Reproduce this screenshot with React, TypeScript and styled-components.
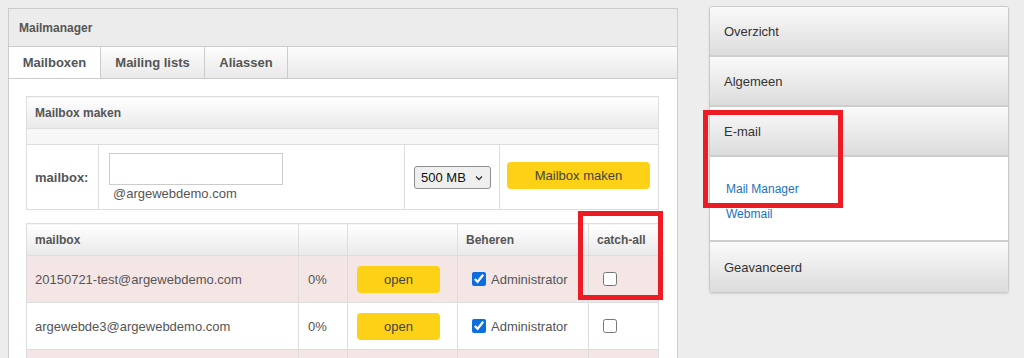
import React from 'react';
import styled, { createGlobalStyle } from 'styled-components';

const GlobalStyle = createGlobalStyle`
  html, body {
    margin: 0;
    padding: 0;
    background: #ededed;
    font-family: "Liberation Sans", Arial, sans-serif;
    color: #555;
  }
`;

const Page = styled.div`
  position: relative;
  display: flex;
  align-items: flex-start;
  padding: 6px 0 0 8px;
`;

const Panel = styled.section`
  width: 668px;
  margin-top: 2px;
  border: 1px solid #ccc;
  background: #fff;
`;

const PanelHeader = styled.div`
  height: 37px;
  display: flex;
  align-items: center;
  padding-left: 10px;
  background: #ececec;
  border-bottom: 1px solid #ccc;
  font-size: 12px;
  font-weight: bold;
  color: #555;
`;

const Tabs = styled.div`
  display: flex;
  height: 31px;
  background: linear-gradient(#fdfdfd, #e9e9e9);
  border-bottom: 1px solid #ccc;
`;

const Tab = styled.div<{ $active?: boolean; $w: number }>`
  display: flex;
  align-items: center;
  justify-content: center;
  box-sizing: border-box;
  width: ${({ $w }) => $w}px;
  border-right: 1px solid #ccc;
  font-size: 13px;
  font-weight: bold;
  color: #555;
  background: ${({ $active }) => ($active ? '#fff' : 'transparent')};
`;

const Content = styled.div`
  padding: 17px 18px 0 17px;
`;

const Grid = styled.table`
  width: 100%;
  border-collapse: collapse;
  table-layout: fixed;
  border: 1px solid #ddd;
  font-size: 13px;
  color: #555;
`;

const HeadCell = styled.th<{ $plain?: boolean }>`
  height: 31px;
  padding: 0 8px;
  text-align: left;
  font-size: 12px;
  font-weight: bold;
  color: #555;
  background: linear-gradient(#fff, #e9e9e9);
  border-left: ${({ $plain }) => ($plain ? '0' : '1px solid #ddd')};
  border-bottom: 1px solid #ddd;
`;

const Strip = styled.td`
  height: 15px;
  padding: 0;
  background: #f7f7f7;
  border-bottom: 1px solid #ddd;
`;

const FormCell = styled.td<{ $pad?: number }>`
  height: 64px;
  padding: 0 0 0 ${({ $pad }) => $pad ?? 8}px;
  border: 1px solid #ddd;
  vertical-align: middle;
`;

const Label = styled.span`
  font-weight: bold;
  font-size: 13px;
  color: #555;
`;

const TextInput = styled.input`
  display: block;
  box-sizing: border-box;
  width: 174px;
  height: 32px;
  margin: 0;
  border: 1px solid #ccc;
  background: #fff;
`;

const Domain = styled.div`
  margin: 1px 0 0 4px;
  font-size: 13px;
  color: #555;
`;

const SelectBox = styled.div`
  position: relative;
  display: inline-flex;
  align-items: center;
  box-sizing: border-box;
  width: 77px;
  height: 23px;
  padding-left: 6px;
  border: 1px solid #8f8f8f;
  border-radius: 3px;
  background: #efefef;
  font-size: 13px;
  color: #111;
`;

const Chevron = styled.svg`
  position: absolute;
  right: 7px;
  top: 8px;
`;

const YellowButton = styled.button<{ $w: number; $h: number }>`
  width: ${({ $w }) => $w}px;
  height: ${({ $h }) => $h}px;
  margin: 0;
  border: 0;
  border-radius: 4px;
  background: #fdd116;
  font-family: "Liberation Sans", Arial, sans-serif;
  font-size: 13px;
  color: #444;
  cursor: pointer;
`;

const MakeButton = styled(YellowButton)`
  margin-bottom: 4px;
`;

const ListTable = styled(Grid)`
  margin-top: 13px;
`;

const Row = styled.tr<{ $odd?: boolean }>`
  background: ${({ $odd }) => ($odd ? '#f5e6e6' : '#fff')};
`;

const Cell = styled.td<{ $pad?: number }>`
  height: 46px;
  padding: 0 0 0 ${({ $pad }) => $pad ?? 8}px;
  border: 1px solid #ddd;
  white-space: nowrap;
  vertical-align: middle;
`;

const Check = styled.input`
  width: 14px;
  height: 14px;
  margin: 0 5px 0 0;
  vertical-align: -2px;
  accent-color: #0b6ddf;
`;

const Sidebar = styled.nav`
  width: 298px;
  margin-left: 31px;
  border: 1px solid #cacaca;
  border-radius: 3px;
  overflow: hidden;
  box-shadow: 0 1px 2px rgba(0, 0, 0, 0.12);
`;

const NavItem = styled.div`
  height: 48px;
  display: flex;
  align-items: center;
  padding-left: 14px;
  background: linear-gradient(#fafafa, #dcdcdc);
  border-bottom: 2px solid #cdcdcd;
  font-size: 13px;
  color: #333;

  &:last-child {
    height: 50px;
    border-bottom: 0;
  }
`;

const SubMenu = styled.div`
  display: flex;
  flex-direction: column;
  padding: 20px 16px 13px;
  background: #fff;
  border-bottom: 2px solid #cdcdcd;
`;

const SubLink = styled.a`
  line-height: 25px;
  font-size: 12px;
  color: #1a72b8;
  text-decoration: none;
`;

const Marker = styled.div<{ $x: number; $y: number; $w: number; $h: number }>`
  position: absolute;
  left: ${({ $x }) => $x}px;
  top: ${({ $y }) => $y}px;
  width: ${({ $w }) => $w}px;
  height: ${({ $h }) => $h}px;
  box-sizing: border-box;
  border: 5px solid #ed1c24;
  pointer-events: none;
`;

const mailboxes = ['20150721-test@argewebdemo.com', 'argewebde3@argewebdemo.com'];

export default function App() {
  return (
    <>
      <GlobalStyle />
      <Page>
        <Panel>
          <PanelHeader>Mailmanager</PanelHeader>
          <Tabs>
            <Tab $active $w={92}>Mailboxen</Tab>
            <Tab $w={104}>Mailing lists</Tab>
            <Tab $w={83}>Aliassen</Tab>
          </Tabs>
          <Content>
            <Grid>
              <colgroup>
                <col style={{ width: 72 }} />
                <col style={{ width: 306 }} />
                <col style={{ width: 95 }} />
                <col />
              </colgroup>
              <thead>
                <tr>
                  <HeadCell $plain colSpan={4}>Mailbox maken</HeadCell>
                </tr>
              </thead>
              <tbody>
                <tr>
                  <Strip colSpan={4} />
                </tr>
                <tr>
                  <FormCell>
                    <Label>mailbox:</Label>
                  </FormCell>
                  <FormCell $pad={10}>
                    <TextInput type="text" />
                    <Domain>@argewebdemo.com</Domain>
                  </FormCell>
                  <FormCell $pad={9}>
                    <SelectBox>
                      500 MB
                      <Chevron width="8" height="6" viewBox="0 0 8 6">
                        <path d="M1 1.5 L4 4.5 L7 1.5" fill="none" stroke="#333" strokeWidth="1.3" />
                      </Chevron>
                    </SelectBox>
                  </FormCell>
                  <FormCell $pad={7}>
                    <MakeButton $w={143} $h={27}>Mailbox maken</MakeButton>
                  </FormCell>
                </tr>
              </tbody>
            </Grid>

            <ListTable>
              <colgroup>
                <col style={{ width: 272 }} />
                <col style={{ width: 49 }} />
                <col style={{ width: 110 }} />
                <col style={{ width: 131 }} />
                <col />
              </colgroup>
              <thead>
                <tr>
                  <HeadCell>mailbox</HeadCell>
                  <HeadCell />
                  <HeadCell />
                  <HeadCell>Beheren</HeadCell>
                  <HeadCell>catch-all</HeadCell>
                </tr>
              </thead>
              <tbody>
                {mailboxes.map((m, i) => (
                  <Row key={m} $odd={i % 2 === 0}>
                    <Cell>{m}</Cell>
                    <Cell $pad={9}>0%</Cell>
                    <Cell $pad={9}>
                      <YellowButton $w={83} $h={27}>open</YellowButton>
                    </Cell>
                    <Cell $pad={14}>
                      <Check type="checkbox" defaultChecked />
                      Administrator
                    </Cell>
                    <Cell $pad={14}>
                      <Check type="checkbox" />
                    </Cell>
                  </Row>
                ))}
                <Row $odd>
                  <Cell />
                  <Cell />
                  <Cell />
                  <Cell />
                  <Cell />
                </Row>
              </tbody>
            </ListTable>
          </Content>
        </Panel>

        <Sidebar>
          <NavItem>Overzicht</NavItem>
          <NavItem>Algemeen</NavItem>
          <NavItem>E-mail</NavItem>
          <SubMenu>
            <SubLink href="#">Mail Manager</SubLink>
            <SubLink href="#">Webmail</SubLink>
          </SubMenu>
          <NavItem>Geavanceerd</NavItem>
        </Sidebar>

        <Marker $x={578} $y={211} $w={85} $h={89} />
        <Marker $x={703} $y={110} $w={140} $h={98} />
      </Page>
    </>
  );
}
